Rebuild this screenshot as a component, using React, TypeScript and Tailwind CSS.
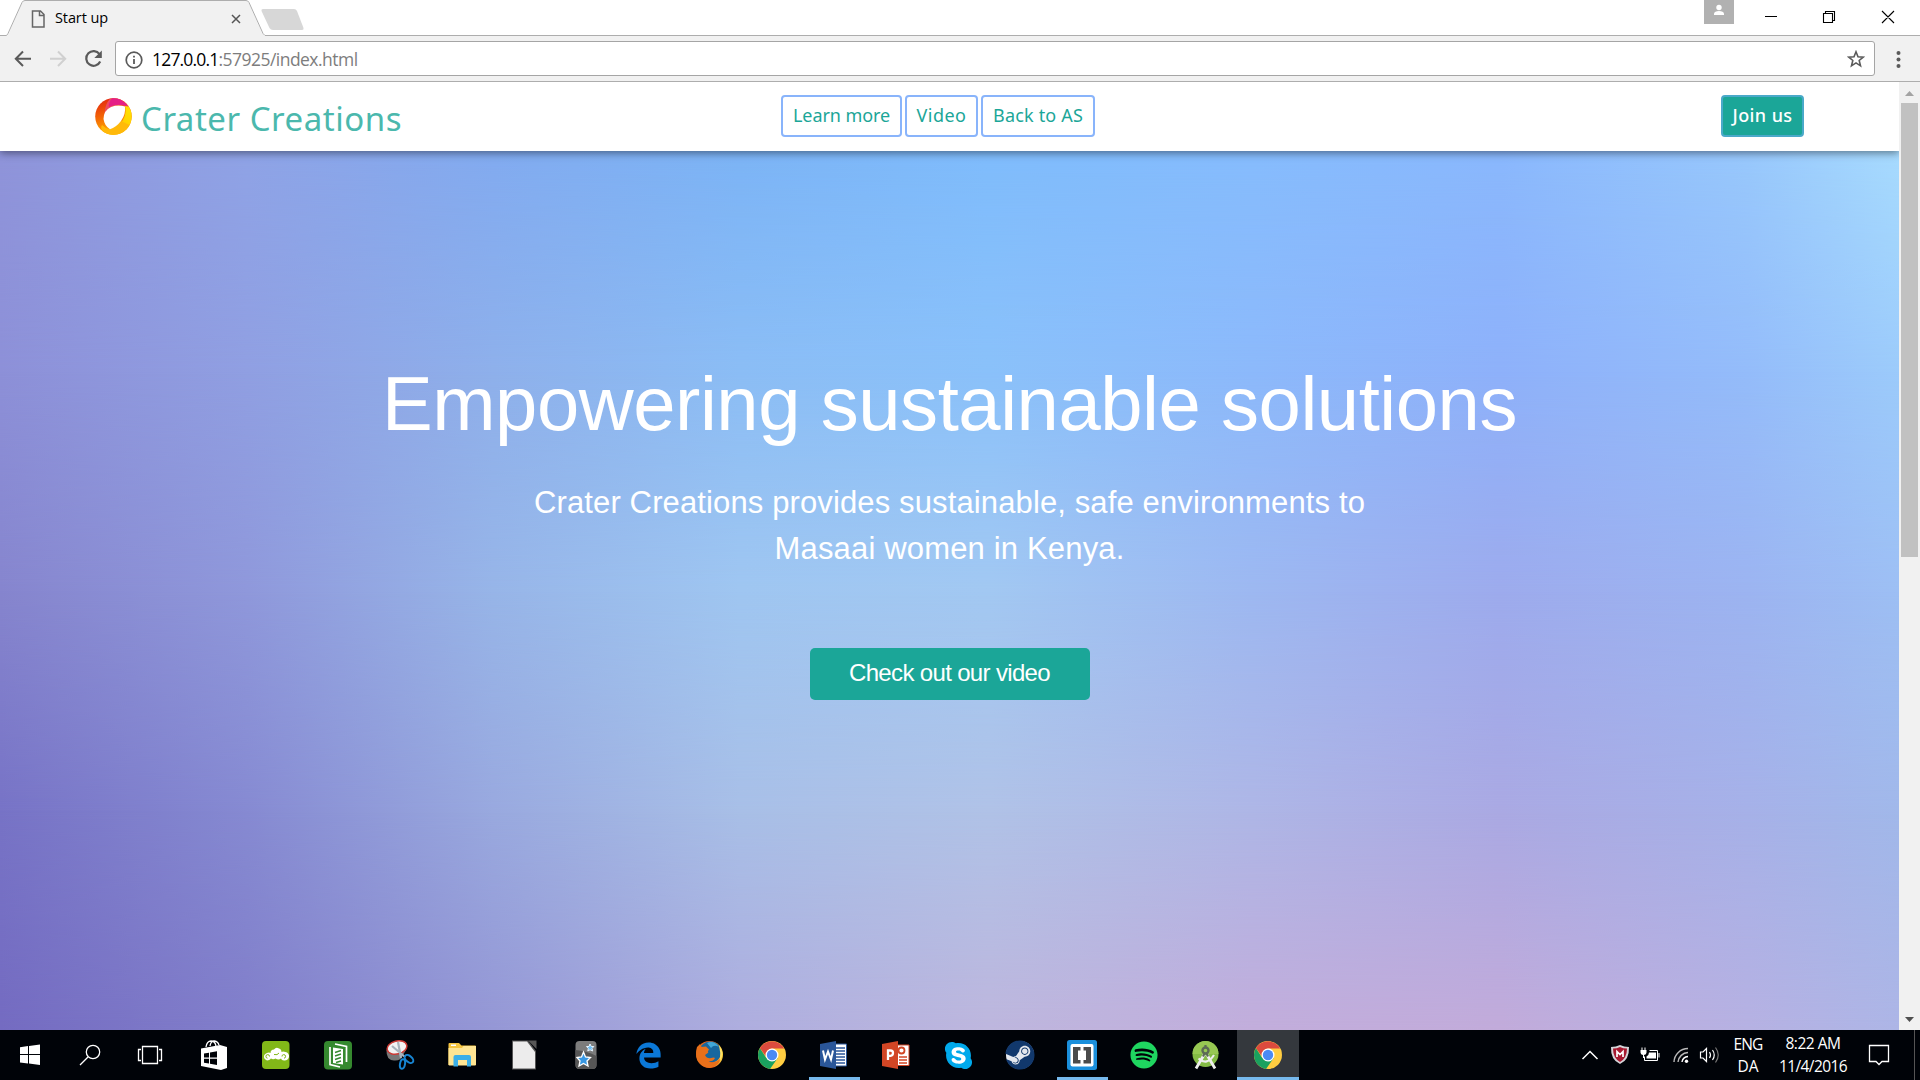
import { useLayoutEffect, useRef, type ReactNode } from "react";
import { FaEdgeLegacy, FaSkype, FaSpotify, FaSteam } from "react-icons/fa6";

/* One line of text whose tracking is adjusted so that it fills a given width. */
function Line({ text, width, className }: { text: string; width: number; className: string }) {
  const ref = useRef<HTMLSpanElement>(null);
  useLayoutEffect(() => {
    const el = ref.current;
    if (!el) return;
    el.style.letterSpacing = "0px";
    const natural = el.getBoundingClientRect().width;
    el.style.letterSpacing = `${(width - natural) / text.length}px`;
  }, [text, width]);
  return (
    <span ref={ref} className={`inline-block whitespace-pre ${className}`}>
      {text}
    </span>
  );
}

/* Rows of the colour mesh; each row fades in over the one above it. */
const mesh = [
  "bg-[linear-gradient(90deg,#8f94da_0%,#8fa3e6_13%,#82abf0_26%,#7cb4f6_39%,#7fbcfc_52%,#86bcfd_66%,#8ab8fd_79%,#98c8fc_92%,#a7dbfe_100%)]",
  "bg-[linear-gradient(90deg,#8d90d8_0%,#909fe2_13%,#8eb0eb_26%,#8bbdf5_39%,#8ac1fa_52%,#8cb9fb_66%,#8eb1fa_79%,#94bcfa_92%,#9ccbfb_100%)] [mask-image:linear-gradient(180deg,transparent_0%,#000_25%)]",
  "bg-[linear-gradient(90deg,#8685ce_0%,#8f98db_13%,#97b5e8_26%,#9fc6f1_39%,#a2c8f2_52%,#9db8f1_66%,#9dabed_79%,#9cb4f1_92%,#9dbff4_100%)] [mask-image:linear-gradient(180deg,transparent_25%,#000_50%)]",
  "bg-[linear-gradient(90deg,#7773c6_0%,#868ad2_13%,#99a9df_26%,#a8bfe7_39%,#b0c2e7_52%,#aeb6e6_66%,#aaa9e3_79%,#a6b1e8_92%,#a1b8ea_100%)] [mask-image:linear-gradient(180deg,transparent_50%,#000_75%)]",
  "bg-[linear-gradient(90deg,#746bc1_0%,#817eca_13%,#9597d5_26%,#aeadde_39%,#bdb6dd_52%,#c2addb_66%,#c2abda_79%,#b6b1e2_92%,#adb5e6_100%)] [mask-image:linear-gradient(180deg,transparent_75%,#000_100%)]",
];

function TabStrip() {
  return (
    <div className="relative flex h-9 shrink-0 items-stretch bg-white">
      <svg className="absolute left-0 top-0" width="1920" height="36" viewBox="0 0 1920 36">
        <path d="M0 35.5H6.5L9 33 22.5 2.5 25 .5H246L248.500 2.500 262 33 264.500 35.500V36H0Z" fill="#f1f1f1" />
        <path d="M0 35.5H6.500L8 33.500 22 2.500Q23 .5 25 .5H246Q248 .5 249 2.500L263 33.500 265 35.500H1920" fill="none" stroke="#adadad" />
        <path d="M263 9H294Q296 9 297 11L303.500 28Q304 30 302 30H273Q270.500 30 269.500 28L261.500 11Q261 9 263 9Z" fill="#d7d7d7" />
        <path d="M32.500 11H40.500L44 14.500V27H32.500ZM39.500 11V15.500H44" fill="none" stroke="#666" strokeWidth="1.500" />
        <path d="M232 15L240 23M240 15L232 23" stroke="#555" strokeWidth="1.500" />
      </svg>
      <div className="relative flex w-[265px] items-center pl-[55px]">
        <Line text="Start up" width={53} className="font-['Open_Sans',sans-serif] text-[14.500px] leading-[36px] text-black" />
      </div>
      <div className="relative ml-auto flex">
        <div className="mr-[9px] flex h-6 w-[30px] justify-center bg-[#b1b1b1]">
          <svg width="30" height="24" viewBox="0 0 30 24" fill="#fff">
            <circle cx="15" cy="7.500" r="2.700" />
            <path d="M10 15V13.500Q10.500 11 15 11T20 13.500V15Z" />
          </svg>
        </div>
        <svg width="177" height="36" viewBox="0 0 177 36" fill="none" stroke="#000" strokeWidth="1.100">
          <path d="M22 16.500H34M80.500 13.500H89.500V22.500H80.500ZM82.500 13V11.500H91.500V20.500H90M139 11L151 23M151 11L139 23" />
        </svg>
      </div>
    </div>
  );
}

function Toolbar() {
  return (
    <div className="flex h-[46px] shrink-0 items-center border-b border-[#adadad] bg-[#f1f1f1]">
      <svg width="115" height="46" viewBox="0 36 115 46" fill="none" strokeWidth="2">
        <path d="M31 58.800H16M23 51.500L15.800 58.800 23 66" stroke="#5a5a5a" />
        <path d="M50 58.800H65M58 51.500L65.200 58.800 58 66" stroke="#d0d0d0" />
        <path d="M99.500 54.200A7.300 7.300 0 1 0 100.200 61.500" stroke="#5a5a5a" strokeWidth="2.200" />
        <path d="M101.800 50.500V58H94.300Z" fill="#5a5a5a" />
      </svg>
      <div className="flex h-[35px] flex-1 items-center rounded-[3px] border border-[#a5a5a5] bg-white">
        <svg className="ml-[9px] mr-[9px] mt-0.5" width="18" height="18" viewBox="0 0 18 18">
          <circle cx="9" cy="9" r="7.800" fill="none" stroke="#5a5a5a" strokeWidth="1.700" />
          <path d="M8.100 8H9.900V13H8.100ZM8.100 4.800H9.900V6.500H8.100Z" fill="#5a5a5a" />
        </svg>
        <Line text="127.0.0.1" width={66.500} className="font-['Open_Sans',sans-serif] text-[17.500px] leading-[30px] text-black" />
        <Line text=":57925/index.html" width={139} className="font-['Open_Sans',sans-serif] text-[17.500px] leading-[30px] text-[#7d7d7d]" />
        <svg className="ml-auto mr-[9px]" width="18" height="18" viewBox="0 0 18 18">
          <path d="M9 1.800L11 6.700 16.300 7.100 12.200 10.500 13.500 15.800 9 12.900 4.500 15.800 5.800 10.500 1.700 7.100 7 6.700Z" fill="none" stroke="#5a5a5a" strokeWidth="1.600" />
        </svg>
      </div>
      <svg width="45" height="46" viewBox="0 0 45 46" fill="#5a5a5a">
        <circle cx="23.500" cy="17" r="2" />
        <circle cx="23.500" cy="23.500" r="2" />
        <circle cx="23.500" cy="30" r="2" />
      </svg>
    </div>
  );
}

function Logo() {
  return (
    <svg width="37" height="37" viewBox="0 0 37 37">
      <defs>
        <linearGradient id="lgWarm" x1="0" y1="0" x2="0.300" y2="1">
          <stop offset="0" stopColor="#e01f10" />
          <stop offset="0.500" stopColor="#f36406" />
          <stop offset="1" stopColor="#ffb400" />
        </linearGradient>
        <linearGradient id="lgGold" x1="1" y1="0" x2="0" y2="1">
          <stop offset="0" stopColor="#ffe600" />
          <stop offset="1" stopColor="#ffb300" />
        </linearGradient>
      </defs>
      <circle cx="18.500" cy="18.500" r="18.300" fill="url(#lgWarm)" />
      <path d="M33 7.500A18.300 18.300 0 0 1 8 33.500Q19 34 26 25 32 17 30 8Z" fill="url(#lgGold)" />
      <path d="M8 33.500Q13 37 18.500 36.800 30 36 34.500 27L26 23 14 31Q10 30 7 27Q5 30 8 33.500Z" fill="#ffb90a" />
      <path d="M15 .8Q26-1.500 33.200 8.500 22 5 15 9.500 11 12 9.500 16 10 6 15 .8Z" fill="#ee4a5e" />
      <path d="M17 .2Q27-.5 33.200 8.500 23 5 14 9 13 4 17 .2Z" fill="#e51f86" />
      <path d="M8.500 21Q8.500 12.500 16 9 23 6.500 30 8.500 31 16 26 23 21 29.500 15 31.200 9.500 28 8.500 21Z" fill="#fff" />
    </svg>
  );
}

const ubuntuish = "font-['Noto_Sans',sans-serif]";

function NavLink({ text, textWidth, size }: { text: string; textWidth: number; size: string }) {
  return (
    <a className={`flex h-[42px] justify-center rounded-[4px] border-2 border-[#89b4fb] ${size}`}>
      <Line text={text} width={textWidth} className={`text-[18px] leading-[36px] text-[#1ba698] ${ubuntuish}`} />
    </a>
  );
}

function SiteHeader() {
  return (
    <header className="relative z-10 flex h-[69px] shrink-0 items-start bg-white shadow-[0_2px_8px_rgba(0,0,0,0.45)]">
      <div className="flex w-[781px] pl-[95px] pt-4">
        <Logo />
        <Line text="Crater Creations" width={261} className={`ml-[9px] mt-[-1px] text-[33px] leading-[44px] text-[#4bb8ad] ${ubuntuish}`} />
      </div>
      <nav className="flex gap-[3px] pt-[13px]">
        <NavLink text="Learn more" textWidth={97} size="w-[121px]" />
        <NavLink text="Video" textWidth={50} size="w-[73px]" />
        <NavLink text="Back to AS" textWidth={90} size="w-[114px]" />
      </nav>
      <a className="ml-auto mr-[95px] mt-[13px] flex h-[42px] w-[83px] justify-center rounded-[4px] border-2 border-[#4aa9c9] bg-[#1ba698]">
        <Line text="Join us" width={60} className={`text-[18px] font-medium leading-[36px] text-white ${ubuntuish}`} />
      </a>
    </header>
  );
}

function Hero() {
  return (
    <section className="relative flex-1 overflow-hidden">
      {mesh.map((row) => (
        <div key={row} className={`absolute inset-0 ${row}`} />
      ))}
      <div className="relative flex flex-col items-center pt-[208px] font-['Liberation_Sans',Arial,sans-serif] text-white">
        <Line text="Empowering sustainable solutions" width={1135} className="text-[76px] leading-[90px]" />
        <Line text="Crater Creations provides sustainable, safe environments to" width={831} className="mt-[31px] text-[31px] leading-[46px]" />
        <Line text="Masaai women in Kenya." width={350} className="text-[31px] leading-[46px]" />
        <a className="mt-[76px] flex h-[52px] w-[280px] justify-center rounded-[5px] bg-[#1ba698]">
          <Line text="Check out our video" width={201} className="text-[24px] leading-[50px]" />
        </a>
      </div>
    </section>
  );
}

function Scrollbar() {
  return (
    <div className="flex w-[21px] shrink-0 flex-col items-center bg-[#f1f1f1]">
      <svg width="21" height="21" viewBox="0 0 21 21">
        <path d="M6 14L10.500 9 15 14Z" fill="#a3a3a3" />
      </svg>
      <div className="h-[454px] w-[17px] bg-[#c1c1c1]" />
      <svg className="mt-auto" width="21" height="21" viewBox="0 0 21 21">
        <path d="M6 8L10.500 13 15 8Z" fill="#505050" />
      </svg>
    </div>
  );
}

function Chrome() {
  return (
    <svg width="28" height="28" viewBox="0 0 28 28">
      <circle cx="14" cy="14" r="14" fill="#ffcd41" />
      <path d="M1.900 7A14 14 0 0 0 12 27.900L19.600 17.300 14 14 8.400 17.200Z" fill="#1aa15f" />
      <path d="M1.900 7A14 14 0 0 1 26.100 7.500H14Q8 8.500 7.700 15Z" fill="#dc4b3e" />
      <circle cx="14" cy="14" r="6.500" fill="#fff" />
      <circle cx="14" cy="14" r="5.200" fill="#4a8af4" />
    </svg>
  );
}

const Svg = ({ children }: { children: ReactNode }) => (
  <svg width="30" height="30" viewBox="0 0 30 30">
    {children}
  </svg>
);

const StoreIcon = (
  <Svg>
    <path d="M7 7Q8 1 12 1T17 6M11 6Q12 .5 15.500 1T20 5" fill="none" stroke="#fff" strokeWidth="1.300" />
    <path d="M2 8.500L21 5 28 7V28L22 30 2 26Z" fill="#fff" />
    <path d="M5 13.500L10 12.700V17.500H5ZM11 12.500L18 11.300V17.500H11ZM5 18.700H10V23.500L5 22.700ZM11 18.700H18V25L11 23.800Z" fill="#000308" />
  </Svg>
);

const CloudIcon = (
  <Svg>
    <rect x="1" y="1" width="27.500" height="28" rx="4" fill="#82b818" />
    <path d="M6 20.500A3.700 3.700 0 0 1 5 13.500Q8 12 9.500 13 9.500 9.500 13 9.500 15 6.500 18 8.500 20.500 9 20.500 12 22 11 24.500 12A4.300 4.300 0 0 1 23 20.500Q20.500 20.500 20 18.500 17.500 20.500 14.500 18.500 12 20 10 18.500 8.500 20.500 6 20.500Z" fill="#fff" />
    <path d="M8.500 16.500A1.800 1.800 0 1 0 6.500 18.200M21 16.500A1.800 1.800 0 1 1 23 18.200M13 14.500Q16.500 15.500 18 13" fill="none" stroke="#82b818" strokeWidth="1" />
  </Svg>
);

const DocsIcon = (
  <Svg>
    <rect x="1" y="1" width="28" height="28.500" rx="4" fill="#35892f" />
    <path d="M10 7.500L20 9V24.500L10 23Z" fill="#fff" />
    <path d="M12 12.500L18 10.500M12 16L18 14M12 19.500L18 17.500M13 22.500L18 21" stroke="#35892f" strokeWidth="1.500" />
    <path d="M7 7V24.500L17 27M12 4L23.500 6.500V22" fill="none" stroke="#fff" strokeWidth="1.700" />
  </Svg>
);

const SnipIcon = (
  <Svg>
    <path d="M1.500 10Q1 20 9 20.500 16 21 18 15L21 10Z" fill="#777" />
    <ellipse cx="12" cy="7.500" rx="10" ry="6.500" transform="rotate(-14 12 7.500)" fill="#f3f3f3" stroke="#cc3a35" strokeWidth="1.500" />
    <path d="M7 6L20 17M13 2L16 18" stroke="#aab3bc" strokeWidth="2.200" />
    <ellipse cx="24" cy="19" rx="5" ry="3" transform="rotate(40 24 19)" fill="none" stroke="#1785d2" strokeWidth="2" />
    <ellipse cx="17.500" cy="24" rx="2.500" ry="4.800" transform="rotate(10 17.500 24)" fill="none" stroke="#1785d2" strokeWidth="2" />
  </Svg>
);

const FolderIcon = (
  <Svg>
    <path d="M1.500 4Q1.500 3 2.500 3H12L14.500 5.500H28Q29 5.500 29 6.500V25H1.500Z" fill="#f6c53f" />
    <path d="M1.500 8H15L16.500 6H29V24.500Q29 25.500 28 25.500H2.500Q1.500 25.500 1.500 24.500Z" fill="#ffe593" />
    <path d="M4 4.500H9V6H4Z" fill="#fff" />
    <path d="M6.500 26.500V17Q6.500 15 8.500 15H22Q24 15 24 17V26.500H20V20H11V26.500Z" fill="#3bafe8" />
  </Svg>
);

const LibreIcon = (
  <Svg>
    <path d="M3 .5H19L27 11V29.500H3Z" fill="#555" />
    <path d="M4 1.500H18L26 12V28.500H4Z" fill="#ececec" />
    <path d="M19 .5H27.500V9Z" fill="#575757" />
  </Svg>
);

const StarsIcon = (
  <Svg>
    <rect x="4.500" y="1" width="21" height="28" rx="4" fill="#7c7c7c" />
    <path d="M4.500 10Q16 11 25.500 16V25Q25.500 29 21 29H9Q4.500 29 4.500 25Z" fill="#565656" />
    <path d="M12.500 12L14.500 17 19.500 17.500 16 21 17 26 12.500 23.500 8 26 9 21 6 17.500 10.500 17Z" fill="#3897e2" stroke="#fff" strokeWidth="1.300" />
    <path d="M19 4L20.300 6.500 22.800 6.500 21 8.500 21.700 11 19 9.800 16.800 11 17.300 8.500 15.500 6.500 18 6.500Z" fill="#6dbcf2" stroke="#e8f5ff" strokeWidth="1" />
  </Svg>
);

const FirefoxIcon = (
  <Svg>
    <defs>
      <linearGradient id="foxBody" x1="0" y1="0" x2="1" y2="0">
        <stop offset="0" stopColor="#e0701a" />
        <stop offset="0.600" stopColor="#e85818" />
        <stop offset="1" stopColor="#ffd93a" />
      </linearGradient>
    </defs>
    <circle cx="14.500" cy="14.500" r="13.500" fill="url(#foxBody)" />
    <path d="M6 6Q13-1 21 3 28 8 25 17 22 23 15 22 9 20 9 14Z" fill="#17679f" />
    <path d="M12 3Q19 0 24 7 19 4 16 8Z" fill="#42a8d8" />
    <path d="M2 7L5 4 6.500 7 11 6.500 14 9.500Q12 12 13.500 12.500L10 15Q12 19 16 18 19 17 20 18 18 22 13 21 19 25 25 19 25 25 15 28 6 27 2.500 20 0 13 2 7Z" fill="#e8701a" />
    <path d="M24 5Q30 13 25 21 26 13 24 5Z" fill="#ffe36a" />
  </Svg>
);

const WordIcon = (
  <Svg>
    <path d="M15 4H27.500V26H15Z" fill="#fff" stroke="#2a5699" />
    <path d="M17 8H26M17 11H26M17 14H26M17 17H26M17 20H26M17 23H26" stroke="#2a5699" strokeWidth="1.300" />
    <path d="M1 4L17 1V29L1 26Z" fill="#2a5699" />
    <path d="M4 10.500L6 19.500 9 11.500 12 19.500 14 10.500" fill="none" stroke="#fff" strokeWidth="2" />
  </Svg>
);

const PowerPointIcon = (
  <Svg>
    <path d="M15 5H28V25.500H15Z" fill="#fff" stroke="#d24625" />
    <path d="M18 17H26M18 20H26M18 23H26" stroke="#d24625" strokeWidth="1.300" />
    <circle cx="20.500" cy="10.500" r="3" fill="none" stroke="#d24625" strokeWidth="1.800" />
    <path d="M1 4L17 1V29L1 26Z" fill="#d24625" />
    <path d="M7 20V10.500H9.500Q12 10.500 12 13T9.500 15.800H7" fill="none" stroke="#fff" strokeWidth="2.300" />
  </Svg>
);

const BracketsIcon = (
  <Svg>
    <rect width="30" height="30" rx="2.500" fill="#1a8fdc" />
    <rect x="3.500" y="4" width="23" height="22.500" rx="2" fill="#fff" />
    <path d="M6 7H13.500V10.500H11V20H13.500V23.500H6ZM16.500 7H24V23.500H16.500V20H19V10.500H16.500Z" fill="#4b4b4b" />
  </Svg>
);

const StudioIcon = (
  <Svg>
    <circle cx="14.500" cy="14" r="13" fill="#84bb45" />
    <path d="M1.500 14A13 13 0 0 1 27.500 14Z" fill="#97c853" />
    <path d="M13.500 14L5 28.500M15.500 14L24 28.500" stroke="#eee" strokeWidth="2.800" />
    <path d="M7.500 18.500Q16 26 23 15" fill="none" stroke="#eee" strokeWidth="2.200" />
    <circle cx="14.500" cy="10.500" r="3" fill="none" stroke="#5c6b55" strokeWidth="2.400" />
    <path d="M14.500 5V8M13.500 13.500L12 16.500M15.500 13.500L17 16.500" stroke="#5c6b55" strokeWidth="2.200" />
  </Svg>
);

const SkypeIcon = (
  <span className="grid place-items-center">
    <span className="col-start-1 row-start-1 size-5 rounded-full bg-white" />
    <FaSkype className="col-start-1 row-start-1 size-[31px] text-[#00a9eb]" />
  </span>
);

const SteamIcon = (
  <span className="grid place-items-center">
    <span className="col-start-1 row-start-1 size-[28px] rounded-full bg-[#e4e8ee]" />
    <FaSteam className="col-start-1 row-start-1 size-[30px] text-[#11386c]" />
  </span>
);

type App = { name: string; icon: ReactNode; state?: "open" | "active" };
const apps: App[] = [
  { name: "store", icon: StoreIcon },
  { name: "cloud", icon: CloudIcon },
  { name: "docs", icon: DocsIcon },
  { name: "snip", icon: SnipIcon },
  { name: "folder", icon: FolderIcon },
  { name: "libre", icon: LibreIcon },
  { name: "stars", icon: StarsIcon },
  { name: "edge", icon: <FaEdgeLegacy className="size-[27px] text-[#0b78d7]" /> },
  { name: "firefox", icon: FirefoxIcon },
  { name: "chrome-pin", icon: <Chrome /> },
  { name: "word", icon: WordIcon, state: "open" },
  { name: "powerpoint", icon: PowerPointIcon },
  { name: "skype", icon: SkypeIcon },
  { name: "steam", icon: SteamIcon },
  { name: "brackets", icon: BracketsIcon, state: "open" },
  { name: "spotify", icon: <FaSpotify className="size-[28px] text-[#1fd660]" /> },
  { name: "studio", icon: StudioIcon },
  { name: "chrome", icon: <Chrome />, state: "active" },
];

function Taskbar() {
  const face = "font-['Open_Sans',sans-serif] text-[15.500px] leading-[22px] text-white";
  return (
    <footer className="flex h-[50px] shrink-0 bg-[#000308]">
      <svg width="183" height="50" viewBox="0 0 183 50">
        <path d="M20 17.300L28 16V24H20ZM29 15.900L40 14.500V24H29ZM20 25H28V33.500L20 32.500ZM29 25H40V35L29 33.600Z" fill="#fff" />
        <g fill="none" stroke="#fff" strokeWidth="1.300">
          <circle cx="93" cy="22" r="6.700" />
          <path d="M88 27L80 35M142.500 16.500H157.500V33.500H142.500ZM141 19.500H138.500V30.500H141M159 19.500H161.500V30.500H159" />
        </g>
      </svg>
      {apps.map((app) => (
        <div
          key={app.name}
          className={`relative flex w-[62px] items-center justify-center ${app.state === "active" ? "bg-[#34383d]" : ""}`}
        >
          {app.icon}
          {app.state && (
            <div className={`absolute bottom-0 h-[3px] bg-[#76b9ed] ${app.state === "active" ? "inset-x-0" : "left-[6px] right-[5px]"}`} />
          )}
        </div>
      ))}
      <svg className="ml-auto" width="145" height="50" viewBox="1578 1030 145 50" fill="none">
        <path d="M1582.500 1059L1590 1051.500 1597.500 1059" stroke="#fff" strokeWidth="1.500" />
        <path d="M1611 1047Q1616 1047 1620 1045 1624 1047 1629 1047 1629.500 1060 1620 1064 1610.500 1060 1611 1047Z" fill="#d4d4d8" />
        <path d="M1613 1048.500Q1617 1048.500 1620 1047 1623 1048.500 1627 1048.500 1627 1058 1620 1062 1613 1058 1613 1048.500Z" fill="#a71930" />
        <path d="M1617 1057V1051.500L1620 1054.500 1623 1051.500V1057" stroke="#fff" strokeWidth="1.700" />
        <path d="M1649.500 1050.500H1657.500V1060.500H1644.500V1056.500M1659 1053V1057.500" stroke="#fff" />
        <path d="M1649 1052.500H1656V1058.500H1646.500V1056.500Q1649 1055 1649 1052.500ZM1640.500 1050H1646.500V1052.500Q1646.500 1054.500 1644 1055V1058H1643V1055Q1640.500 1054.500 1640.500 1052.500ZM1641.500 1047.500H1642.500V1050H1641.500ZM1644.500 1047.500H1645.500V1050H1644.500Z" fill="#fff" />
        <path d="M1674 1062A14 14 0 0 1 1688 1048.500M1678 1062A10.500 10.500 0 0 1 1688 1052.500" stroke="#b9b9b9" strokeWidth="1.400" />
        <path d="M1682 1062A6.500 6.500 0 0 1 1688 1056.500" stroke="#fff" strokeWidth="1.400" />
        <circle cx="1686.500" cy="1061.300" r="1.700" fill="#fff" />
        <path d="M1700.500 1052H1703L1706.500 1048.500V1061.500L1703 1058H1700.500ZM1709.500 1052Q1711.500 1055 1709.500 1058M1712.500 1050Q1716 1055 1712.500 1060" stroke="#fff" strokeWidth="1.200" />
        <path d="M1715.500 1047.500Q1721 1055 1715.500 1062.500" stroke="#777" strokeWidth="1.200" />
      </svg>
      <div className="ml-[9px] flex w-[32px] flex-col items-center pt-[3px]">
        <Line text="ENG" width={29} className={face} />
        <Line text="DA" width={21} className={face} />
      </div>
      <div className="flex w-[98px] flex-col items-center pt-[2px]">
        <Line text="8:22 AM" width={55} className={face} />
        <Line text="11/4/2016" width={68} className={`mt-px ${face}`} />
      </div>
      <svg width="58" height="50" viewBox="1862 1030 58 50" fill="none">
        <path d="M1869.500 1045.500H1888.500V1061.500H1882L1879 1064.500 1876 1061.500H1869.500Z" stroke="#fff" strokeWidth="1.300" />
        <path d="M1914.500 1030V1080" stroke="#555" />
      </svg>
    </footer>
  );
}

export default function App() {
  return (
    <div className="flex h-[1080px] w-[1920px] flex-col overflow-hidden">
      <TabStrip />
      <Toolbar />
      <div className="flex min-h-0 flex-1">
        <main className="flex flex-1 flex-col overflow-hidden">
          <SiteHeader />
          <Hero />
        </main>
        <Scrollbar />
      </div>
      <Taskbar />
    </div>
  );
}
